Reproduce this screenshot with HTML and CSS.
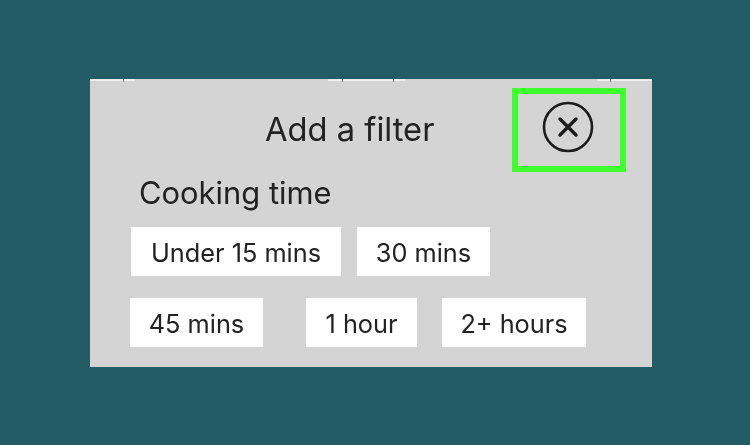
FILE: index.html
```html
<!DOCTYPE html>
<html lang="en">
<head>
<meta charset="UTF-8">
<meta name="viewport" content="width=device-width, initial-scale=1.0">
<title>Add a filter</title>
<link rel="stylesheet" href="styles.css">
</head>
<body>
<div class="panel">
  <div class="top-strip">
    <span class="strip-piece piece-left"><i class="tick tick-left"></i></span>
    <span class="strip-piece piece-mid"><i class="tick tick-mid-a"></i><i class="tick tick-mid-b"></i></span>
    <span class="strip-piece piece-right"><i class="tick tick-right"></i></span>
  </div>
  <div class="header">
    <h1 class="title">Add a filter</h1>
    <button class="close" aria-label="Close">
      <svg width="52" height="52" viewBox="0 0 52 52" fill="none" stroke="#1c1c1c">
        <circle cx="26" cy="26" r="24" stroke-width="2.6"/>
        <path d="M18 18 L34 34 M34 18 L18 34" stroke-width="3.4" stroke-linecap="round"/>
      </svg>
    </button>
  </div>
  <h2 class="section">Cooking time</h2>
  <div class="chips chips-first">
    <span class="chip chip-under">Under 15 mins</span>
    <span class="chip chip-30">30 mins</span>
  </div>
  <div class="chips chips-second">
    <span class="chip chip-45">45 mins</span>
    <span class="chip chip-hour">1 hour</span>
    <span class="chip chip-more">2+ hours</span>
  </div>
</div>
</body>
</html>
```

FILE: styles.css
```css
html, body {
  height: 100%;
}
body {
  margin: 0;
  padding: 79px 0 0 90px;
  box-sizing: border-box;
  background: #235c64;
  font-family: Inter, "Liberation Sans", sans-serif;
  color: #222;
  overflow: hidden;
}
.panel {
  width: 562px;
  height: 288px;
  background: #d4d4d4;
  filter: blur(0.5px);
}
.top-strip {
  display: flex;
  height: 2px;
}
.strip-piece {
  display: flex;
  justify-content: space-between;
  background: #eee;
  box-sizing: border-box;
}
.piece-left {
  width: 45px;
  padding-left: 33px;
}
.piece-mid {
  width: 77px;
  padding: 0 11px 0 14px;
  margin-left: 193px;
}
.piece-right {
  width: 55px;
  padding-left: 13px;
  margin-left: auto;
}
.tick {
  display: block;
  width: 1px;
  height: 3px;
  background: #777;
}
.header {
  display: flex;
  margin: 7px 26px 0 0;
  justify-content: flex-end;
  position: relative;
  height: 84px;
}
.title {
  position: absolute;
  left: 175px;
  top: 21px;
  margin: 0;
  font-size: 32.7px;
  font-weight: 400;
  line-height: 40px;
}
.close {
  width: 114px;
  height: 84px;
  padding: 0 2px 6px 0;
  box-sizing: border-box;
  border: 6px solid #3fff2e;
  background: none;
  display: flex;
  align-items: center;
  justify-content: center;
}
.section {
  margin: 0 0 0 49px;
  padding-top: 1px;
  font-size: 30.9px;
  font-weight: 400;
  line-height: 40px;
}
.chips {
  display: flex;
}
.chips-first {
  margin: 14px 0 0 41px;
  gap: 16px;
}
.chips-second {
  margin: 22px 0 0 40px;
  gap: 43px;
}
.chip {
  display: flex;
  align-items: center;
  justify-content: center;
  height: 49px;
  padding-top: 2px;
  box-sizing: border-box;
  background: #fff;
  font-size: 25.3px;
}
.chip-under { width: 210px; }
.chip-30 { width: 133px; }
.chip-45 { width: 133px; }
.chip-hour { width: 111px; }
.chip-more { width: 144px; margin-left: -18px; }
```
